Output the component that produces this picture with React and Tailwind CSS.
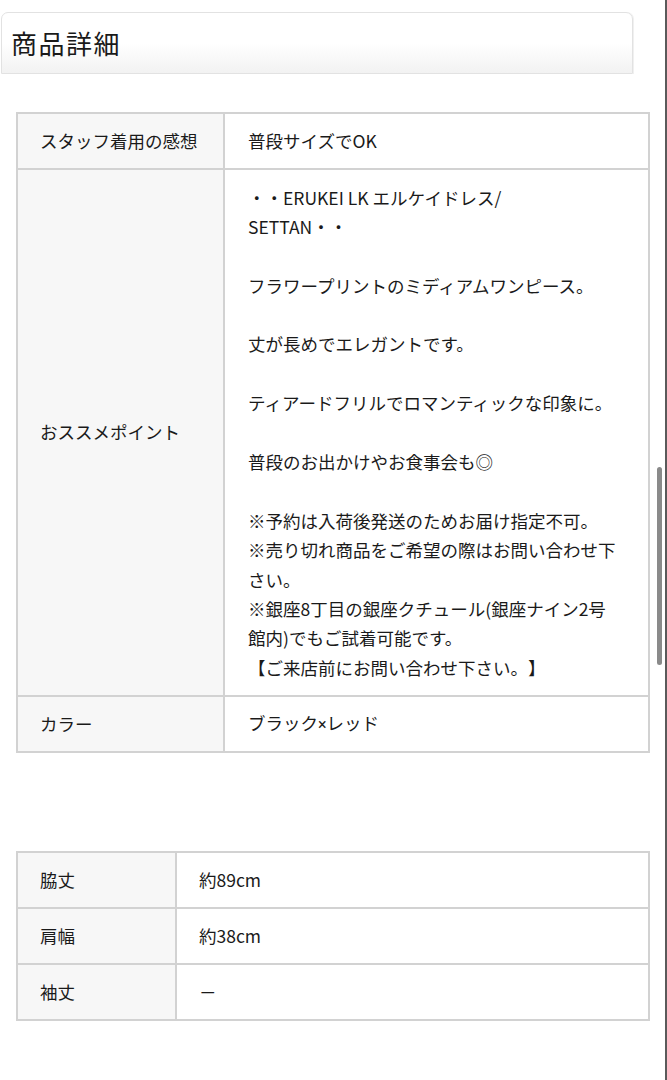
import React from 'react';

const recommend = [
  '・・ERUKEI LK エルケイドレス/',
  'SETTAN・・',
  '',
  'フラワープリントのミディアムワンピース。',
  '',
  '丈が長めでエレガントです。',
  '',
  'ティアードフリルでロマンティックな印象に。',
  '',
  '普段のお出かけやお食事会も◎',
  '',
  '※予約は入荷後発送のためお届け指定不可。',
  '※売り切れ商品をご希望の際はお問い合わせ下',
  'さい。',
  '※銀座8丁目の銀座クチュール(銀座ナイン2号',
  '館内)でもご試着可能です。',
  '【ご来店前にお問い合わせ下さい。】',
];

const sizes = [
  ['脇丈', '約89cm'],
  ['肩幅', '約38cm'],
  ['袖丈', '－'],
];

const App = () => {
  return (
    <div className="relative w-[667px] h-[1080px] bg-white overflow-hidden text-[#1a1a1a] [text-spacing-trim:space-all] font-['Noto_Sans_CJK_JP',sans-serif]">
      <div className="flex h-full">
        <div className="w-[665px] pt-[12px]">
          {/* heading */}
          <div className="ml-[1px] w-[632px] h-[62px] flex items-center pl-[9px] rounded-t-[7px] border border-[#e2e2e2] bg-gradient-to-b from-white from-50% to-[#f2f2f2] shadow-[1px_0_0_#f0f0f0]">
            <h2 className="text-[26px] tracking-[1.5px] leading-none">商品詳細</h2>
          </div>

          <table className="mt-[38px] ml-[16px] w-[634px] border-collapse text-[17.5px]">
            <tbody>
              <tr>
                <td className="w-[207px] h-[56px] bg-[#f7f7f7] border-2 border-[#d2d2d2] pl-[22px] align-middle">スタッフ着用の感想</td>
                <td className="border-2 border-[#d2d2d2] pl-[23px] align-middle">普段サイズでOK</td>
              </tr>
              <tr>
                <td className="bg-[#f7f7f7] border-2 border-[#d2d2d2] pl-[22px] align-middle">おススメポイント</td>
                <td className="border-2 border-[#d2d2d2] pl-[23px] pr-[20px] py-[12.5px] leading-[29.4px] align-middle">
                  {recommend.map((line, i) => (
                    <div key={i} className="h-[29.4px] whitespace-nowrap">{line}</div>
                  ))}
                </td>
              </tr>
              <tr>
                <td className="h-[56px] bg-[#f7f7f7] border-2 border-[#d2d2d2] pl-[22px] align-middle">カラー</td>
                <td className="border-2 border-[#d2d2d2] pl-[23px] align-middle">
                  ブラック<span className="font-['Roboto',sans-serif] text-[16px]">×</span>レッド
                </td>
              </tr>
            </tbody>
          </table>

          <table className="mt-[98px] ml-[16px] w-[634px] border-collapse text-[17.5px]">
            <tbody>
              {sizes.map(([k, v]) => (
                <tr key={k}>
                  <td className="w-[159px] h-[56px] bg-[#f7f7f7] border-2 border-[#d2d2d2] pl-[22px] align-middle">{k}</td>
                  <td className="border-2 border-[#d2d2d2] pl-[22px] align-middle">{v}</td>
                </tr>
              ))}
            </tbody>
          </table>
        </div>
        <div className="w-[2px] h-full bg-[#5a5a5a]" />
      </div>
      {/* scroll indicator */}
      <div className="absolute left-[657px] top-[467px] w-[5px] h-[198px] rounded-full bg-[#8a8a8a]" />
    </div>
  );
};

export default App;
